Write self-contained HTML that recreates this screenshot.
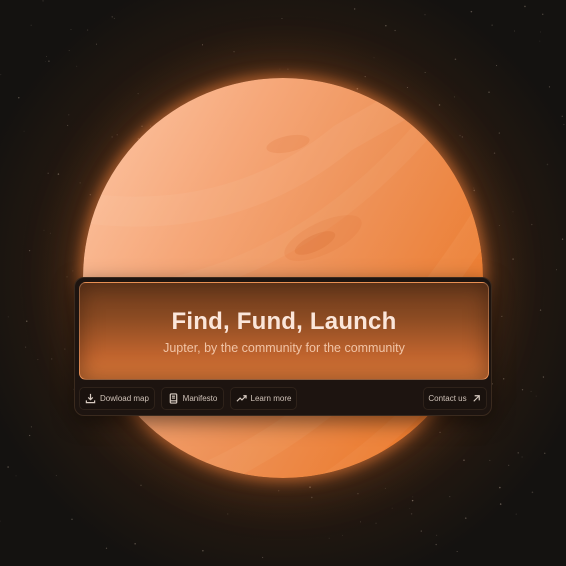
<!DOCTYPE html>
<html><head><meta charset="utf-8"><style>
*{margin:0;padding:0;box-sizing:border-box}
html,body{width:566px;height:566px;overflow:hidden;background:#141210;font-family:"Liberation Sans",sans-serif}
.bg{position:absolute;inset:0;background:radial-gradient(circle at 283px 278px,rgba(130,70,25,.55) 0,rgba(70,40,18,.35) 225px,rgba(20,18,16,0) 320px)}
.planet{position:absolute;left:83px;top:78px;width:400px;height:400px;border-radius:50%;
background:linear-gradient(120deg,#fdc8a8 0%,#f6a87a 30%,#ee9258 55%,#ec7f35 80%,#f2711c 100%);
box-shadow:0 0 14px 3px rgba(245,130,60,.6),0 0 50px 10px rgba(230,110,40,.25);overflow:hidden}
.card{position:absolute;left:74px;top:277px;width:418px;height:139px;border-radius:10px;background:#1d1410;border:1px solid #3a2a1e;box-shadow:0 6px 20px rgba(0,0,0,.5)}
.inner{position:absolute;left:4px;top:4px;width:410px;height:98px;border-radius:7px;
background:linear-gradient(180deg,#6a3a1c 0%,#8a4a22 35%,#c0642e 75%,#e07c3a 100%);border:1px solid rgba(255,200,160,.25);box-shadow:inset 0 0 22px rgba(40,20,10,.5)}
h1{position:absolute;left:0;right:0;top:25px;text-align:center;color:#fbe6da;font-size:24px;font-weight:bold;letter-spacing:.2px}
p{position:absolute;left:0;right:0;top:58px;text-align:center;color:#f1c4a6;font-size:12.5px}
.btn{position:absolute;top:109px;height:23px;border-radius:5px;background:#1a120e;border:1px solid #2e221a;color:#cfc2b8;font-size:8px;display:flex;align-items:center;justify-content:center;gap:4px;white-space:nowrap}
.btn svg{width:11px;height:11px;stroke:#d8ccc2;fill:none;stroke-width:1.3}
</style></head><body>
<div class="bg"></div>
<svg width="566" height="566" style="position:absolute;left:0;top:0" id="stars"></svg>
<div class="planet">
<svg width="400" height="400" style="position:absolute;left:0;top:0">
<path d="M0 130 Q150 150 260 60 L330 20" stroke="rgba(255,230,210,.08)" stroke-width="30" fill="none"/>
<path d="M-10 220 Q200 220 350 40" stroke="rgba(255,230,210,.06)" stroke-width="20" fill="none"/>
<path d="M120 400 Q300 320 420 110" stroke="rgba(255,220,190,.07)" stroke-width="28" fill="none"/>
<path d="M220 420 Q360 330 430 200" stroke="rgba(255,220,190,.06)" stroke-width="18" fill="none"/>
<ellipse cx="205" cy="66" rx="22" ry="8" fill="rgba(220,110,50,.2)" transform="rotate(-12 205 66)"/>
<ellipse cx="240" cy="160" rx="42" ry="16" fill="rgba(220,110,50,.15)" transform="rotate(-25 240 160)"/>
<ellipse cx="232" cy="165" rx="22" ry="8" fill="rgba(210,100,40,.22)" transform="rotate(-25 232 165)"/>
</svg></div>
<div class="card">
<div class="inner"><h1>Find, Fund, Launch</h1><p>Jupter, by the community for the community</p></div>
<div class="btn" style="left:4px;width:76px"><svg viewBox="0 0 12 12"><path d="M6 1v6M3.5 4.8 6 7.3 8.5 4.8M1.5 8v2.5h9V8"/></svg>Dowload map</div>
<div class="btn" style="left:86px;width:63px"><svg viewBox="0 0 12 12"><rect x="2.5" y="1" width="7" height="10" rx="1"/><path d="M4.3 3.5h3.4M4.3 5.5h3.4M2.5 8.5h7"/></svg>Manifesto</div>
<div class="btn" style="left:155px;width:67px"><svg viewBox="0 0 12 12"><path d="M1 9 4.5 5.5 6.5 7.5 11 3M8 3h3v3"/></svg>Learn more</div>
<div class="btn" style="left:348px;width:64px">Contact us<svg viewBox="0 0 12 12"><path d="M3 9 9 3M4 3h5v5"/></svg></div>
</div>
<script>
var s=document.getElementById('stars'),h='',seed=7;
function r(){seed=(seed*16807)%2147483647;return seed/2147483647}
for(var i=0;i<220;i++){var x=r()*566,y=r()*566;h+='<circle cx="'+x+'" cy="'+y+'" r="'+(0.4+r()*0.4)+'" fill="rgba(220,200,180,'+(0.12+r()*0.3)+')"/>'}
s.innerHTML=h;
</script>
</body></html>
